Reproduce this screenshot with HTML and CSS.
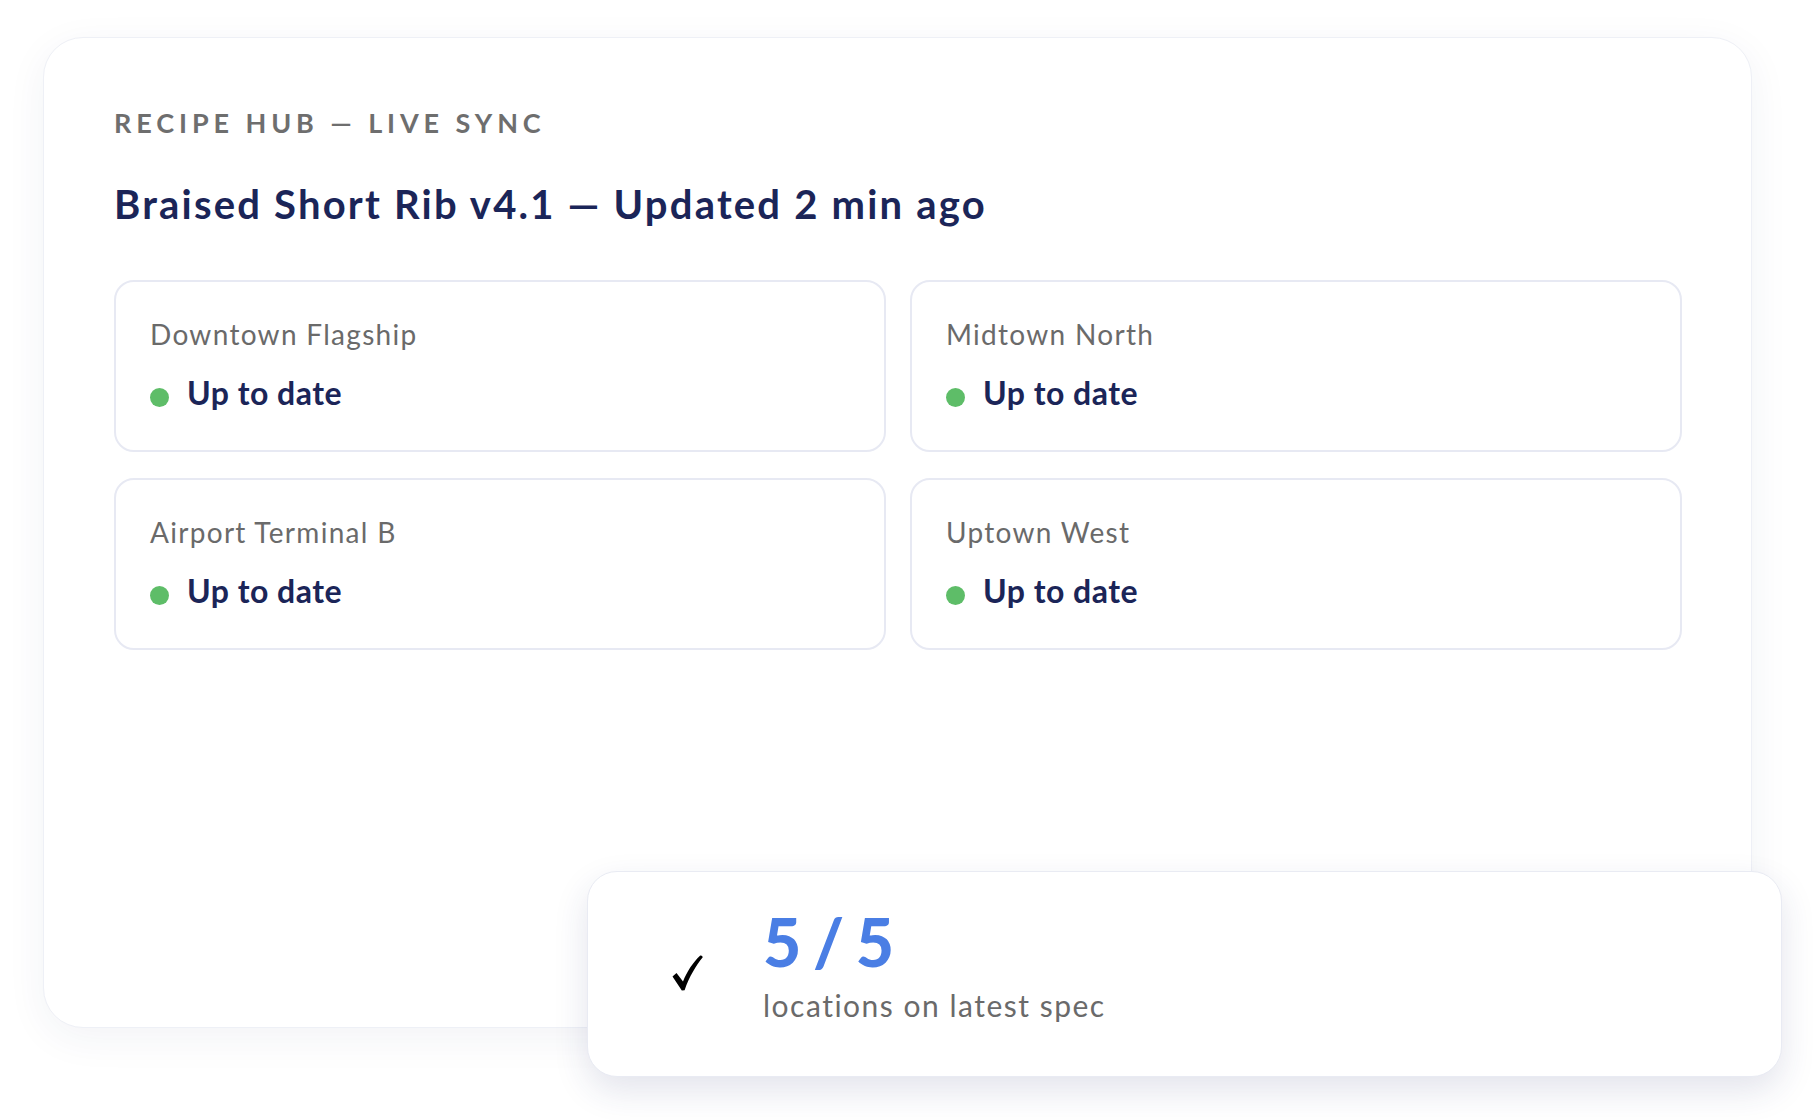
FILE: index.html
```html
<!DOCTYPE html>
<html lang="en">
<head>
<meta charset="utf-8">
<title>Recipe Hub — Live Sync</title>
<link rel="stylesheet" href="styles.css">
</head>
<body>
<div class="stage">
  <section class="panel">
    <div class="eyebrow">RECIPE HUB — LIVE SYNC</div>
    <h1 class="title">Braised Short Rib v4.1 — Updated 2 min ago</h1>
    <div class="grid">
      <div class="loc">
        <div class="loc-name">Downtown Flagship</div>
        <div class="loc-status"><span class="dot"></span><span>Up to date</span></div>
      </div>
      <div class="loc">
        <div class="loc-name">Midtown North</div>
        <div class="loc-status"><span class="dot"></span><span>Up to date</span></div>
      </div>
      <div class="loc">
        <div class="loc-name">Airport Terminal B</div>
        <div class="loc-status"><span class="dot"></span><span>Up to date</span></div>
      </div>
      <div class="loc">
        <div class="loc-name">Uptown West</div>
        <div class="loc-status"><span class="dot"></span><span>Up to date</span></div>
      </div>
    </div>
  </section>
  <aside class="summary">
    <svg class="check" width="32" height="38" viewBox="0 0 32 38" aria-hidden="true">
      <path d="M0.5,22.5 L4.5,19 L11,27.5 C15,17.5 21,8.5 28,1.8 C29.2,0.8 31,2.2 30.6,3.6 C24,11.5 17.5,22.5 12.6,36.2 L9.8,36.4 Z" fill="#000"/>
    </svg>
    <div class="summary-text">
      <div class="count">5 / 5</div>
      <div class="caption">locations on latest spec</div>
    </div>
  </aside>
</div>
</body>
</html>
```
FILE: styles.css
```css
html, body {
  margin: 0;
  padding: 0;
  background: #ffffff;
}
body {
  font-family: Lato, "Noto Sans", "Liberation Sans", sans-serif;
}
.stage {
  position: relative;
  box-sizing: border-box;
  width: 1818px;
  height: 1120px;
  overflow: hidden;
  padding: 37px 0 0 43px;
}
.panel {
  box-sizing: border-box;
  width: 1709px;
  height: 991px;
  background: #ffffff;
  border: 1px solid #eef0f6;
  border-radius: 40px;
  box-shadow: 0 10px 40px rgba(40, 50, 110, 0.06);
  padding: 71px 70px 0 70px;
}
.eyebrow {
  font-size: 27px;
  line-height: 27px;
  font-weight: 700;
  letter-spacing: 4.9px;
  color: #6e6e6e;
}
.title {
  margin: 48px 0 0 0;
  font-size: 40px;
  line-height: 40px;
  font-weight: 700;
  letter-spacing: 2.2px;
  color: #1b2558;
}
.grid {
  margin-top: 56px;
  display: grid;
  grid-template-columns: 772px 772px;
  gap: 26px 24px;
}
.loc {
  box-sizing: border-box;
  height: 172px;
  border: 2px solid #e7e9f3;
  border-radius: 20px;
  padding: 38px 34px 0 34px;
  background: #ffffff;
}
.loc-name {
  font-size: 28px;
  line-height: 28px;
  letter-spacing: 1.3px;
  color: #6a6a6a;
}
.loc-status {
  margin-top: 29px;
  display: flex;
  align-items: center;
  gap: 18px;
  font-size: 32px;
  line-height: 32px;
  font-weight: 700;
  letter-spacing: 0.5px;
  color: #1b2558;
}
.dot {
  width: 19px;
  height: 19px;
  margin-top: 8px;
  border-radius: 50%;
  background: #5ebd68;
  flex: none;
}
.summary {
  position: absolute;
  left: 587px;
  top: 871px;
  box-sizing: border-box;
  width: 1195px;
  height: 206px;
  background: #ffffff;
  border: 1px solid #e9ebf3;
  border-radius: 30px;
  box-shadow: 0 14px 34px rgba(40, 50, 110, 0.13);
  display: flex;
  align-items: flex-start;
  padding: 0 0 0 84px;
  gap: 59px;
}
.check {
  flex: none;
  margin-top: 82px;
}
.summary-text {
  display: flex;
  flex-direction: column;
  gap: 15px;
  margin-top: 37px;
}
.count {
  font-size: 66px;
  line-height: 66px;
  font-weight: 900;
  letter-spacing: -2px;
  color: #4a7ee4;
}
.caption {
  font-size: 30px;
  line-height: 30px;
  letter-spacing: 1.5px;
  color: #6a6a6a;
}
```
